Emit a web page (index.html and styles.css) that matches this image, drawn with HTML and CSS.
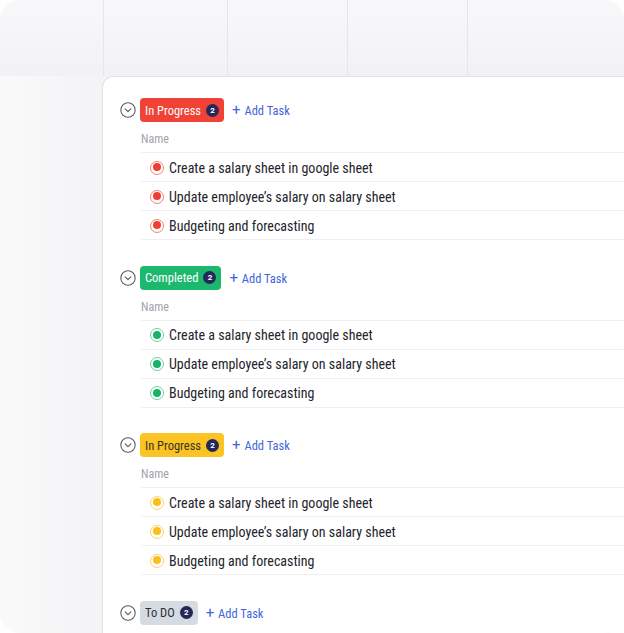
FILE: index.html
```html
<!DOCTYPE html>
<html>
<head>
<meta charset="utf-8">
<link rel="stylesheet" href="styles.css">
</head>
<body>
<div class="frame">
  <div class="cols">
    <div class="col first"></div>
    <div class="col"></div>
    <div class="col"></div>
    <div class="col"></div>
  </div>
  <div class="card">
    <section class="group red">
      <div class="head">
        <svg class="chev" viewBox="0 0 16 16" width="16" height="16"><circle cx="8" cy="8" r="7.2" fill="none" stroke="#5b5b66" stroke-width="1.1"/><path d="M5.2 6.9 L8 9.6 L10.8 6.9" fill="none" stroke="#5b5b66" stroke-width="1.2" stroke-linecap="round" stroke-linejoin="round"/></svg>
        <span class="badge">In Progress <span class="count">2</span></span>
        <span class="add"><span class="plus">+</span> Add Task</span>
      </div>
      <div class="name">Name</div>
      <div class="row"><span class="dot"></span>Create a salary sheet in google sheet</div>
      <div class="row"><span class="dot"></span>Update employee’s salary on salary sheet</div>
      <div class="row"><span class="dot"></span>Budgeting and forecasting</div>
    </section>
    <section class="group green">
      <div class="head">
        <svg class="chev" viewBox="0 0 16 16" width="16" height="16"><circle cx="8" cy="8" r="7.2" fill="none" stroke="#5b5b66" stroke-width="1.1"/><path d="M5.2 6.9 L8 9.6 L10.8 6.9" fill="none" stroke="#5b5b66" stroke-width="1.2" stroke-linecap="round" stroke-linejoin="round"/></svg>
        <span class="badge">Completed <span class="count">2</span></span>
        <span class="add"><span class="plus">+</span> Add Task</span>
      </div>
      <div class="name">Name</div>
      <div class="row"><span class="dot"></span>Create a salary sheet in google sheet</div>
      <div class="row"><span class="dot"></span>Update employee’s salary on salary sheet</div>
      <div class="row"><span class="dot"></span>Budgeting and forecasting</div>
    </section>
    <section class="group yellow">
      <div class="head">
        <svg class="chev" viewBox="0 0 16 16" width="16" height="16"><circle cx="8" cy="8" r="7.2" fill="none" stroke="#5b5b66" stroke-width="1.1"/><path d="M5.2 6.9 L8 9.6 L10.8 6.9" fill="none" stroke="#5b5b66" stroke-width="1.2" stroke-linecap="round" stroke-linejoin="round"/></svg>
        <span class="badge">In Progress <span class="count">2</span></span>
        <span class="add"><span class="plus">+</span> Add Task</span>
      </div>
      <div class="name">Name</div>
      <div class="row"><span class="dot"></span>Create a salary sheet in google sheet</div>
      <div class="row"><span class="dot"></span>Update employee’s salary on salary sheet</div>
      <div class="row"><span class="dot"></span>Budgeting and forecasting</div>
    </section>
    <section class="group gray">
      <div class="head">
        <svg class="chev" viewBox="0 0 16 16" width="16" height="16"><circle cx="8" cy="8" r="7.2" fill="none" stroke="#5b5b66" stroke-width="1.1"/><path d="M5.2 6.9 L8 9.6 L10.8 6.9" fill="none" stroke="#5b5b66" stroke-width="1.2" stroke-linecap="round" stroke-linejoin="round"/></svg>
        <span class="badge">To DO <span class="count">2</span></span>
        <span class="add"><span class="plus">+</span> Add Task</span>
      </div>
    </section>
  </div>
</div>
</body>
</html>
```
FILE: styles.css
```css
* { box-sizing: border-box; }
html, body { margin: 0; padding: 0; background: #ffffff; }
body {
  font-family: Roboto, "Liberation Sans", sans-serif;
  font-stretch: 80%;
  width: 624px;
  height: 633px;
  overflow: hidden;
}
.frame {
  width: 624px;
  height: 633px;
  border-radius: 20px;
  overflow: hidden;
  background: linear-gradient(90deg, #fafafb 0%, #f4f4f6 14%, #f2f1f3 100%);
  display: flex;
  flex-direction: column;
}
.cols {
  height: 76px;
  flex: none;
  display: flex;
  padding-left: 103px;
  background: linear-gradient(180deg, #f8f7f9 0%, #f2f1f3 100%);
}
.col {
  width: 120px;
  border-left: 1px solid #e6e5ea;
}
.col.first { width: 124px; }
.card {
  flex: 1;
  margin-left: 102px;
  background: #ffffff;
  border-top: 1px solid #e2e2e6;
  border-left: 1px solid #e2e2e6;
  border-top-left-radius: 11px;
  padding: 21px 0 0 17px;
  overflow: hidden;
}
.group { margin-bottom: 25.5px; }
.head {
  display: flex;
  align-items: center;
  height: 24px;
}
.chev { flex: none; width: 16px; height: 16px; margin-right: 4px; }
.badge {
  display: flex;
  align-items: center;
  height: 24px;
  padding: 0 5px 0 5px;
  border-radius: 4px;
  font-size: 12.5px;
  color: #ffffff;
}
.count {
  display: inline-flex;
  align-items: center;
  justify-content: center;
  width: 13px;
  height: 13px;
  border-radius: 50%;
  background: #25285a;
  color: #ffffff;
  font-size: 8px;
  font-weight: 700;
  font-stretch: 100%;
  margin-left: 5px;
}
.add {
  margin-left: 8px;
  font-size: 12.5px;
  color: #3f66dc;
}
.plus { font-size: 15px; margin-right: 1px; font-stretch: 100%; }
.name {
  margin-left: 21px;
  height: 31px;
  padding-top: 10px;
  font-size: 12px;
  color: #a3a3ab;
  border-bottom: 1px solid #efeff1;
}
.row {
  margin-left: 21px;
  height: 29px;
  display: flex;
  align-items: center;
  padding: 1px 0 0 9px;
  font-size: 14px;
  color: #24242c;
  border-bottom: 1px solid #efeff1;
}
.dot {
  flex: none;
  width: 14px;
  height: 14px;
  border-radius: 50%;
  border: 1.5px solid currentColor;
  margin-right: 5px;
  position: relative;
}
.dot::after {
  content: "";
  position: absolute;
  left: 1.5px;
  top: 1.5px;
  width: 8px;
  height: 8px;
  border-radius: 50%;
  background: var(--c);
}
.red .badge { background: #f04236; }
.red .dot { border-color: #f4827a; --c: #ef3f33; }
.green .badge { background: #1cb86e; }
.green .dot { border-color: #6fd1a3; --c: #18b269; }
.yellow .badge { background: #fbc323; color: #3a3420; }
.yellow .dot { border-color: #fbd46a; --c: #f9c01b; }
.gray .badge { background: #d6dae1; color: #2e3040; }
```
